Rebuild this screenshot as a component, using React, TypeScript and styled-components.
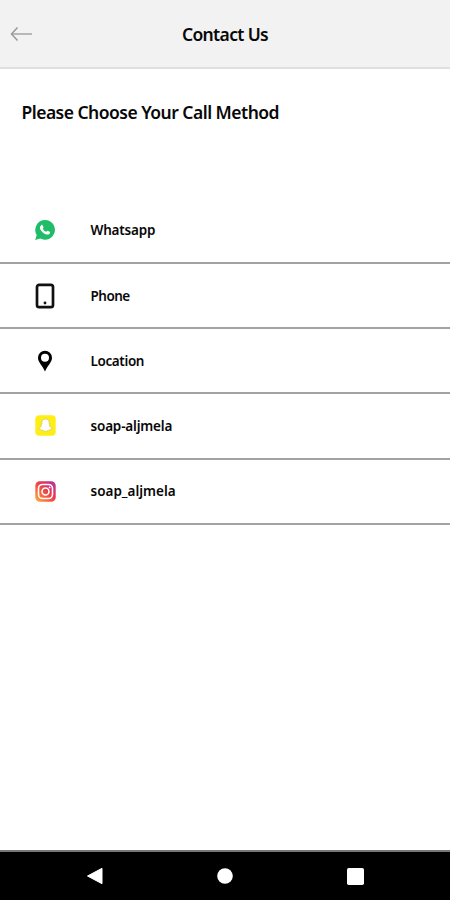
import React from "react";
import styled, { createGlobalStyle } from "styled-components";

const GlobalStyle = createGlobalStyle`
  * { box-sizing: border-box; }
  body { margin: 0; background: #fff; }
`;

const Screen = styled.div`
  display: flex;
  flex-direction: column;
  width: 450px;
  height: 900px;
  overflow: hidden;
  background: #fff;
  color: #080808;
  font-family: "Noto Sans", "Open Sans", sans-serif;
  font-weight: 600;
`;

const Header = styled.header`
  display: grid;
  grid-template-columns: 44px 1fr 44px;
  align-items: center;
  height: 69px;
  border-bottom: 2px solid #dfdfdf;
  background: #f2f2f2;
`;

const BackButton = styled.button`
  display: flex;
  padding: 0 0 0 10px;
  border: 0;
  background: none;
`;

const Title = styled.h1`
  margin: 0;
  font-size: 17.5px;
  font-weight: 600;
  line-height: 24px;
  text-align: center;
  white-space: nowrap;
  letter-spacing: -0.65px;
`;

const Content = styled.main`
  flex: 1;
  padding-top: 31px;
`;

const Prompt = styled.h2`
  margin: 0 0 74px 21.5px;
  font-size: 17.5px;
  font-weight: 600;
  line-height: 24px;
  white-space: nowrap;
  letter-spacing: -0.52px;
`;

const MethodList = styled.ul`
  margin: 0;
  padding: 0;
  list-style: none;
`;

const MethodRow = styled.li`
  display: flex;
  align-items: center;
  height: 65.2px;
  border-bottom: 2px solid #a3a3a3;

  &:first-child {
    height: 66px;
  }
`;

const IconSlot = styled.span`
  display: flex;
  justify-content: center;
  width: 90.5px;

  svg { display: block; }
`;

const Label = styled.span<{ $spacing: number }>`
  font-size: 13.5px;
  line-height: 20px;
  letter-spacing: ${(p) => p.$spacing}px;
`;

const NavBar = styled.nav`
  display: grid;
  grid-template-columns: 1fr 70px 1fr;
  align-items: center;
  height: 50px;
  border-top: 2px solid #777;
  background: #000;
`;

const NavItem = styled.span`
  display: flex;
  justify-content: center;
`;

const WhatsappIcon = () => (
  <svg width="20" height="20" viewBox="0 0 20 20">
    <path d="M10.1 0A9.9 9.9 0 0 0 1.7 15L.2 19.9 5.3 18.6A9.9 9.9 0 1 0 10.1 0Z" fill="#20bd68" />
    <path
      d="M6.1 5.2c.5-.5 1.2-.5 1.5.1l.9 1.9c.2.5-.7 1.1-.7 1.5.8 1.5 1.9 2.5 3.4 3.1.4.1 1-1.1 1.4-1l2.1 1c.7.4.3 1.6-.4 2.2-1.5 1.1-3.8.3-5.8-1.1-1.8-1.3-3.2-3.1-3.5-4.7-.2-1.2.3-2.2 1.1-3Z"
      fill="#fff"
    />
  </svg>
);

const PhoneIcon = () => (
  <svg width="20" height="26" viewBox="0 0 20 26">
    <rect x="2" y="1.8" width="16" height="22.4" rx="2.2" fill="#fff" stroke="#111" strokeWidth="2.7" />
    <circle cx="10" cy="20" r="1.4" fill="#111" />
  </svg>
);

const LocationIcon = () => (
  <svg width="16" height="22" viewBox="0 0 16 22">
    <path
      d="M8 .8a7 7 0 0 0-7 7C1 12.600 5.600 15.500 8 21.600c2.400-6.100 7-9 7-13.800a7 7 0 0 0-7-7Zm0 2.900a4 4 0 1 1 0 8 4 4 0 0 1 0-8Z"
      fill="#000"
      fillRule="evenodd"
    />
  </svg>
);

const SnapchatIcon = () => (
  <svg width="21" height="21" viewBox="0 0 21 21">
    <rect x=".3" y=".3" width="20.4" height="20.4" rx="4" fill="#ffee16" />
    <path
      d="M10.5 4c-2.500 0-3.700 1.600-3.700 3.600v1.600l-1.100-.1c-.3.7.8.8.8 1.400-.3 1.400-1.500 2.400-2.800 2.800.1.900 1.300.9 1.900 1.300.3.900 1.300.4 2 .6.900.3 1.600 1.100 2.900 1.100s2-.8 2.900-1.100c.7-.2 1.700.3 2-.6.6-.4 1.800-.4 1.900-1.300-1.300-.4-2.500-1.400-2.800-2.800 0-.6 1.100-.7.8-1.400l-1.100.1V7.600c0-2-1.200-3.600-3.700-3.600Z"
      fill="#fff"
      stroke="#cfc36a"
      strokeWidth=".7"
    />
  </svg>
);

const InstagramIcon = () => (
  <svg width="21" height="21" viewBox="0 0 21 21">
    <defs>
      <linearGradient id="sunset" x1="0" y1="1" x2="1" y2="0">
        <stop offset="0" stopColor="#ffb43c" />
        <stop offset=".3" stopColor="#fa6b3d" />
        <stop offset=".6" stopColor="#e8354f" />
        <stop offset="1" stopColor="#a832b4" />
      </linearGradient>
    </defs>
    <rect x=".3" y=".3" width="20.4" height="20.4" rx="4.5" fill="url(#sunset)" />
    <g fill="none" stroke="#fff" strokeWidth="1.6">
      <rect x="3.5" y="3.5" width="14" height="14" rx="4" />
      <circle cx="10.5" cy="10.5" r="3.5" />
    </g>
    <circle cx="14.6" cy="6.4" r=".9" fill="#fff" />
  </svg>
);

const methods = [
  { label: "Whatsapp", spacing: -0.2, Icon: WhatsappIcon },
  { label: "Phone", spacing: -0.5, Icon: PhoneIcon },
  { label: "Location", spacing: -0.38, Icon: LocationIcon },
  { label: "soap-aljmela", spacing: -0.17, Icon: SnapchatIcon },
  { label: "soap_aljmela", spacing: 0, Icon: InstagramIcon },
];

export default function App() {
  return (
    <>
      <GlobalStyle />
      <Screen>
        <Header>
          <BackButton aria-label="Back">
            <svg width="24" height="16" viewBox="0 0 24 16" fill="none" stroke="#999">
              <path d="M1.500 8H22" stroke="#b2b2b2" strokeWidth="1.8" />
              <path d="M7.500 1.500 1.500 8 7.500 14.500" strokeWidth="1.5" />
            </svg>
          </BackButton>
          <Title>Contact Us</Title>
        </Header>
        <Content>
          <Prompt>Please Choose Your Call Method</Prompt>
          <MethodList>
            {methods.map(({ label, spacing, Icon }) => (
              <MethodRow key={label}>
                <IconSlot><Icon /></IconSlot>
                <Label $spacing={spacing}>{label}</Label>
              </MethodRow>
            ))}
          </MethodList>
        </Content>
        <NavBar>
          <NavItem>
            <svg width="18" height="18" viewBox="0 0 18 18">
              <path d="M1.5 9 16 1.3V16.7Z" fill="#fff" stroke="#fff" strokeLinejoin="round" />
            </svg>
          </NavItem>
          <NavItem>
            <svg width="16" height="16" viewBox="0 0 16 16"><circle cx="8" cy="8" r="7.8" fill="#fff" /></svg>
          </NavItem>
          <NavItem>
            <svg width="17" height="17" viewBox="0 0 17 17"><rect width="17" height="17" rx="1.8" fill="#fff" /></svg>
          </NavItem>
        </NavBar>
      </Screen>
    </>
  );
}
